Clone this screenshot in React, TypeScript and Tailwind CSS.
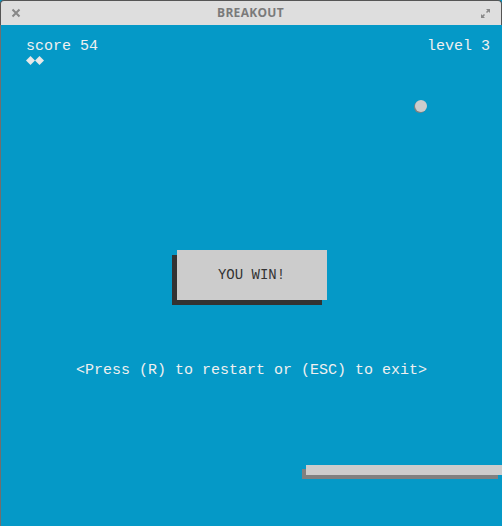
import React from 'react';

const mono = { fontFamily: '"Liberation Mono", "DejaVu Sans Mono", monospace' };

function Diamond() {
    return (
        <svg width="9" height="9" viewBox="0 0 9 9" className="block">
            <path d="M4.5 0 L9 4.5 L4.5 9 L0 4.5 Z" fill="#e8e8e8" />
        </svg>
    );
}

export default function App() {
    return (
        <div className="w-[502px] h-[526px] flex flex-col overflow-hidden bg-[#0599c7]">
            {/* title bar */}
            <header className="h-[25px] shrink-0 bg-[#dedede] rounded-t-[4px] border-t border-l border-r border-[#555] flex items-center justify-between px-[10px]">
                <svg width="10" height="10" viewBox="0 0 10 10">
                    <path d="M1.5 1.5 L8.5 8.5 M8.5 1.5 L1.5 8.5" stroke="#888" strokeWidth="2" />
                </svg>
                <span className="text-[12px] font-bold text-[#7a7a7a] tracking-[0.3px]" style={{ fontFamily: '"Open Sans", "Noto Sans", sans-serif' }}>
                    BREAKOUT
                </span>
                <svg width="11" height="11" viewBox="0 0 11 11">
                    <path d="M6 1 H10 V5 Z M5 10 H1 V6 Z" fill="#888" />
                    <path d="M9 2 L6.5 4.5 M2 9 L4.5 6.5" stroke="#888" strokeWidth="1.5" />
                </svg>
            </header>

            {/* game area */}
            <main className="flex-1 relative flex flex-col border-l border-[#6f6f6f] text-[15px] text-[#f0f0f0]" style={mono}>
                <div className="flex justify-between pl-[25px] pr-[12px] pt-[13px] leading-[18px]">
                    <div>
                        <div>score 54</div>
                        <div className="flex">
                            <Diamond />
                            <Diamond />
                        </div>
                    </div>
                    <div>level 3</div>
                </div>

                <div className="mt-[185px] mx-auto w-[150px] h-[50px] bg-[#cccccc] shadow-[-5px_5px_0_#333333] flex items-center justify-center text-[#333] text-[14px]">
                    YOU WIN!
                </div>

                <div className="mt-[60px] text-center">
                    &lt;Press (R) to restart or (ESC) to exit&gt;
                </div>

                {/* ball */}
                <div className="absolute left-[414px] top-[75px] w-[12px] h-[12px] rounded-full bg-[#cccccc] shadow-[-1px_1px_0_#808080]" />

                {/* paddle */}
                <div className="absolute left-[305px] top-[440px] w-[196px] h-[10px] bg-[#cccccc] shadow-[-4px_4px_0_#808080]" />
            </main>
        </div>
    );
}
